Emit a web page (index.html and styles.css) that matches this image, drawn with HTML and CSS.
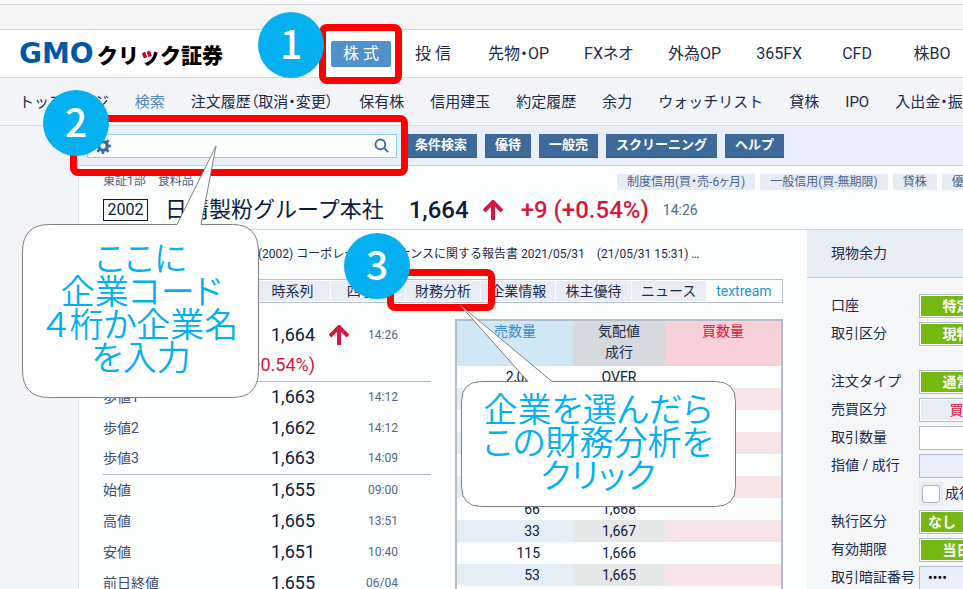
FILE: index.html
```html
<!DOCTYPE html>
<html lang="ja">
<head>
<meta charset="utf-8">
<title>GMOクリック証券</title>
<link rel="stylesheet" href="styles.css">
</head>
<body>
<div class="strip"></div>
<header class="header">
  <a class="logo" href="#"><span class="logo-gmo">GMO</span><span class="logo-name">クリ<span class="logo-dot">ッ</span>ク証券</span></a>
  <nav class="main-nav">
    <a class="active" href="#">株 式</a>
    <a href="#">投 信</a>
    <a href="#">先物・OP</a>
    <a href="#">FXネオ</a>
    <a href="#">外為OP</a>
    <a href="#">365FX</a>
    <a href="#">CFD</a>
    <a href="#">株BO</a>
  </nav>
</header>
<nav class="sub-nav">
  <a href="#">トップページ</a>
  <a class="current" href="#">検索</a>
  <a class="tight" href="#">注文履歴（取消・変更）</a>
  <a href="#">保有株</a>
  <a href="#">信用建玉</a>
  <a href="#">約定履歴</a>
  <a href="#">余力</a>
  <a href="#">ウォッチリスト</a>
  <a href="#">貸株</a>
  <a href="#">IPO</a>
  <a class="tight" href="#">入出金・振替</a>
</nav>
<main class="page">
  <div class="toolbar">
    <div class="search">
      <svg class="gear" viewBox="0 0 24 24" aria-hidden="true"><circle cx="12" cy="12" r="6.500" stroke-width="5"/><circle cx="12" cy="12" r="10" stroke-width="4" pathLength="16" stroke-dasharray="1 1" stroke-dashoffset="0.500"/></svg>
      <input type="text" aria-label="銘柄検索">
      <button class="search-go" type="button" aria-label="検索"><svg viewBox="0 0 16 16"><circle cx="6.800" cy="6.800" r="5.200"/><path d="M10.600 10.600L15 15"/></svg></button>
    </div>
    <button class="tool" type="button">条件検索</button>
    <button class="tool" type="button">優待</button>
    <button class="tool" type="button">一般売</button>
    <button class="tool" type="button">スクリーニング</button>
    <button class="tool" type="button">ヘルプ</button>
  </div>
  <section class="stock">
    <div class="stock-meta">
      <p class="market"><span>東証1部</span><span>食料品</span></p>
      <ul class="tags"><li>制度信用(買・売-6ヶ月)</li><li>一般信用(買-無期限)</li><li>貸株</li><li>優待</li></ul>
    </div>
    <div class="stock-line">
      <span class="code">2002</span>
      <h1>日清製粉グループ本社</h1>
      <strong class="price">1,664</strong>
      <svg class="arrow" viewBox="0 0 20 20"><path d="M10 20V3M1 11l9-9 9 9"/></svg>
      <strong class="change">+9 (+0.54%)</strong>
      <time>14:26</time>
    </div>
  </section>
  <div class="columns">
    <div class="detail">
      <p class="news">(2002) コーポレート<span class="tight">・</span>ガバナンスに関する報告書 2021/05/31　(21/05/31 15:31) …</p>
      <nav class="tabs">
        <a class="tab-first" href="#">時系列</a><a href="#">四季報</a><a href="#">財務分析</a><a href="#">企業情報</a><a href="#">株主優待</a><a href="#">ニュース</a><a class="outside" href="#">textream</a>
      </nav>
      <div class="boards">
        <table class="quotes">
          <tbody>
            <tr><th></th><td class="num">1,664</td><td class="mark"><svg class="arrow" viewBox="0 0 20 20"><path d="M10 20V3M1 11l9-9 9 9"/></svg></td><td class="at">14:26</td></tr>
            <tr><td class="num rise" colspan="2">+9 (+0.54%)</td><td></td><td></td></tr>
          </tbody>
          <tbody>
            <tr><th>歩値1</th><td class="num">1,663</td><td></td><td class="at">14:12</td></tr>
            <tr><th>歩値2</th><td class="num">1,662</td><td></td><td class="at">14:12</td></tr>
            <tr><th>歩値3</th><td class="num">1,663</td><td></td><td class="at">14:09</td></tr>
          </tbody>
          <tbody>
            <tr><th>始値</th><td class="num">1,655</td><td></td><td class="at">09:00</td></tr>
            <tr><th>高値</th><td class="num">1,665</td><td></td><td class="at">13:51</td></tr>
            <tr><th>安値</th><td class="num">1,651</td><td></td><td class="at">10:40</td></tr>
            <tr><th>前日終値</th><td class="num">1,655</td><td></td><td class="at">06/04</td></tr>
          </tbody>
        </table>
        <table class="book">
          <thead><tr><th class="sell">売数量</th><th class="mid">気配値<br>成行</th><th class="buy">買数量</th></tr></thead>
          <tbody>
            <tr><td>2,000</td><td>OVER</td><td></td></tr>
            <tr><td></td><td></td><td></td></tr>
            <tr><td></td><td></td><td></td></tr>
            <tr><td></td><td></td><td></td></tr>
            <tr><td></td><td></td><td></td></tr>
            <tr><td></td><td></td><td></td></tr>
            <tr><td>66</td><td>1,668</td><td></td></tr>
            <tr><td>33</td><td>1,667</td><td></td></tr>
            <tr><td>115</td><td>1,666</td><td></td></tr>
            <tr><td>53</td><td>1,665</td><td></td></tr>
            <tr><td></td><td></td><td></td></tr>
          </tbody>
        </table>
      </div>
    </div>
    <aside class="order">
      <h2>現物余力</h2>
      <form>
        <div class="field"><span class="label">口座</span><span class="box"><button class="on" type="button">特定</button></span></div>
        <div class="field"><span class="label">取引区分</span><span class="box"><button class="on" type="button">現物</button></span></div>
        <div class="field spaced"><span class="label">注文タイプ</span><span class="box"><button class="on" type="button">通常</button></span></div>
        <div class="field"><span class="label">売買区分</span><span class="box"><button class="off" type="button">買</button></span></div>
        <div class="field"><label class="label" for="qty">取引数量</label><input class="box" id="qty" type="text"></div>
        <div class="field"><label class="label" for="limit">指値 / 成行</label><input class="box tint" id="limit" type="text"></div>
        <div class="field"><span class="label"></span><label class="check"><span class="check-cell"><input type="checkbox"></span>成行</label></div>
        <div class="field"><span class="label">執行区分</span><span class="box"><button class="on short" type="button">なし</button></span></div>
        <div class="field"><span class="label">有効期限</span><span class="box"><button class="on" type="button">当日</button></span></div>
        <div class="field"><label class="label" for="pin">取引暗証番号</label><input class="box tint" id="pin" type="password" value="0000"></div>
      </form>
    </aside>
  </div>
</main>
<div class="frame frame-1"></div>
<div class="frame frame-2"></div>
<div class="frame frame-3"></div>
<div class="step step-1">1</div>
<div class="step step-2">2</div>
<div class="step step-3">3</div>
<div class="callout callout-1">
  <svg viewBox="0 0 238 254"><path d="M27.500 79.500H155L194 1L179 79.500H210.500Q236.500 79.500 236.500 107V225Q236.500 252.500 210.500 252.500H27.500Q0.500 252.500 0.500 225V107Q0.500 79.500 27.500 79.500Z"/></svg>
  <p>ここに<br>企業コード<br>４桁か企業名<br>を入力</p>
</div>
<div class="callout callout-2">
  <svg viewBox="0 0 278 204"><path d="M69 77.500L1 1L93 77.500H256.500Q276.500 77.500 276.500 97.500V182.500Q276.500 202.500 256.500 202.500H22.500Q2.500 202.500 2.500 182.500V97.500Q2.500 77.500 22.500 77.500Z"/></svg>
  <p>企業を選んだら<br>この財務分析を<br>クリック</p>
</div>
</body>
</html>
```
FILE: styles.css
```css
* { box-sizing: border-box; }
html, body { height: 100%; }
body {
  margin: 0;
  position: relative;
  overflow: hidden;
  background: #f2f4f8;
  color: #1c2b4a;
  font-family: Roboto, "Noto Sans CJK JP", sans-serif;
  font-size: 14px;
  line-height: 22px;
}
a { color: inherit; text-decoration: none; }
button, input { font: inherit; margin: 0; }
h1, h2, p, ul { margin: 0; padding: 0; }
table { border-collapse: collapse; }
th { font-weight: 400; text-align: left; }
td, th { padding: 0; }
.tight { font-feature-settings: "palt"; }

.strip {
  height: 30px;
  border-top: 4px solid #fdfdfe;
  border-bottom: 1px solid #d5dade;
  background: #f5f5f6;
  box-shadow: inset 0 1px #d4d8e4;
}
.header {
  display: flex;
  align-items: center;
  height: 48px;
  padding-left: 19px;
  background: #fff;
  border-bottom: 1px solid #d6dade;
}
.logo { display: flex; flex: none; align-items: center; width: 312px; color: #000; }
.logo-gmo { width: 78px; font: 700 28px/30px "DejaVu Sans", sans-serif; color: #0058a8; }
.logo-name { font: 900 21px/30px "Noto Sans CJK JP", sans-serif; }
.logo-dot {
  color: transparent;
  background: linear-gradient(#e0001b, #e0001b) 0 0 / 13px 18px no-repeat, #000;
  background-clip: text;
}
.main-nav { display: flex; gap: 35px; align-items: center; padding-top: 1px; font-size: 16px; white-space: nowrap; font-feature-settings: "palt"; }
.main-nav a { min-width: 40px; text-align: center; }
.main-nav .active {
  margin-right: -13px;
  padding: 2px 12px;
  background: #5090cb;
  color: #fff;
  border-radius: 2px;
}
.sub-nav {
  display: flex;
  align-items: center;
  gap: 26px;
  height: 48px;
  padding-left: 19px;
  border-bottom: 1px solid #d5dbe4;
  font-size: 15px;
  white-space: nowrap;
}
.sub-nav .current { color: #5089bd; }

.page { margin-left: 78px; background: #fcfdfd; border-left: 1px solid #dbe1ea; }
.toolbar {
  display: flex;
  align-items: center;
  gap: 8px;
  height: 40px;
  padding-left: 8px;
  background: #e8effa;
  border-bottom: 1px solid #c3d2e6;
}
.search {
  display: flex;
  align-items: center;
  width: 310px;
  height: 24px;
  padding: 0 7px;
  background: #fcfdfd;
  border: 1px solid #8ed0f2;
}
.gear { flex: none; width: 16px; height: 16px; fill: none; stroke: #3e6a99; }
.search input { flex: 1; min-width: 0; height: 20px; border: 0; background: none; }
.search-go { padding: 0; border: 0; background: none; height: 16px; }
.search-go svg { display: block; width: 15px; height: 15px; fill: none; stroke: #3e6a99; stroke-width: 2; }
.tool {
  height: 24px;
  padding: 0 10px;
  border: 0;
  border-bottom: 1px solid #2f5680;
  background: #3d6a99;
  color: #fff;
  font-size: 13px;
  font-weight: 700;
  line-height: 22px;
  white-space: nowrap;
}

.stock { height: 64px; padding-left: 24px; border-bottom: 1px solid #c8d6e4; }
.stock-meta { display: flex; padding-top: 8px; color: #4b628c; font-size: 12px; line-height: 16px; white-space: nowrap; font-feature-settings: "palt"; }
.market { display: flex; flex: none; gap: 12px; width: 514px; line-height: 14px; }
.tags { display: flex; gap: 5px; list-style: none; }
.tags li { padding: 0 10px; background: #e6ecf4; }
.stock-line { display: flex; align-items: center; height: 40px; white-space: nowrap; color: #0d1b38; }
.code { width: 45px; border: 1px solid #0d1b38; font-size: 16px; line-height: 20px; text-align: center; }
.stock-line h1 { margin-left: 17px; font-size: 22px; font-weight: 400; line-height: 32px; }
.price { margin-left: 25px; font-size: 24px; font-weight: 500; }
.arrow { display: block; width: 20px; height: 20px; fill: none; stroke: #d3193f; stroke-width: 4; }
.stock-line .arrow { margin: 0 18px 0 14px; }
.change { color: #d3193f; font-size: 24px; font-weight: 500; }
.stock-line time { margin-left: 14px; color: #50678c; }

.columns { display: flex; }
.detail { flex: none; width: 728px; padding: 0 24px; }
.news { padding: 13px 0 0 155px; font-size: 12px; white-space: nowrap; }
.tabs {
  display: grid;
  grid-template-columns: repeat(9, 1fr);
  gap: 1px;
  height: 24px;
  margin-top: 14px;
  border: 1px solid #b5bfcd;
  padding: 1px;
}
.tabs a { background: #e8edf5; line-height: 20px; text-align: center; white-space: nowrap; }
.tab-first { grid-column: 3; }
.tabs .outside { background: none; color: #1c94dc; }
.boards { display: flex; justify-content: space-between; align-items: flex-start; margin-top: 16px; }
.quotes { width: 328px; table-layout: fixed; color: #3d4f70; }
.quotes tr { height: 31px; }
.quotes tbody + tbody { border-top: 1px solid #b3bdc9; }
.quotes th { width: 121px; }
.num { width: 91px; color: #0d1b38; font-size: 18px; text-align: right; }
.rise { color: #d3193f; }
.mark { padding-left: 14px; }
.at { width: 84px; padding-right: 33px; color: #50678c; font-size: 12px; text-align: right; }
.book { width: 328px; table-layout: fixed; border: 2px solid #b3bcc9; border-collapse: separate; border-spacing: 0; }
.book th { height: 45px; vertical-align: top; text-align: center; line-height: 21px; }
.book th.sell { width: 116px; background: #d0e8f5; color: #3d88c6; }
.book th.mid { width: 92px; background: #d6d9de; }
.book th.buy { background: #f7d0d8; color: #d3193f; }
.book td { height: 22px; text-align: center; color: #0d1b38; }
.book td:first-child { padding-right: 33px; text-align: right; }
.book tbody tr:nth-child(even) td { background: #e6e7e9; }
.book tbody tr:nth-child(even) td:first-child { background: #e4eef7; }
.book tbody tr:nth-child(even) td:last-child { background: #f6e4e8; }

.order { flex: 1; min-width: 0; overflow: hidden; background: #f4f6f8; min-height: 400px; white-space: nowrap; }
.order h2 { height: 48px; padding-left: 24px; background: #e7edf4; border-bottom: 1px solid #c5d3e2; font-size: 14px; font-weight: 400; line-height: 46px; }
.order form { display: grid; gap: 4px; padding: 16px 0 0 24px; }
.field { display: flex; height: 24px; }
.spaced { margin-top: 20px; }
.label { flex: none; width: 88px; }
.box { flex: none; width: 260px; height: 24px; padding: 1px; border: 1px solid #b0bac8; border-radius: 0; background: #fff; }
input.box { padding: 0 8px; font-size: 14px; }
input.tint { background: #e8effb; }
.box button { display: block; width: 71px; height: 20px; padding: 0; border: 0; font-size: 14px; line-height: 20px; }
.box .on { background: #76b812; color: #fff; font-weight: 700; }
.box .off { background: #e7edf4; color: #d3193f; }
.box .short { width: 42px; }
.check { display: flex; gap: 2px; }
.check-cell { display: flex; align-items: center; justify-content: center; width: 24px; background: #e7edf4; }
.check input { appearance: none; width: 18px; height: 18px; border: 1px solid #a9b4c4; border-radius: 3px; background: #fff; }

.frame { position: absolute; border: 7px solid #f00; border-radius: 8px; }
.frame-1 { left: 319px; top: 24px; width: 83px; height: 60px; }
.frame-2 { left: 70px; top: 115px; width: 338px; height: 61px; }
.frame-3 { left: 387px; top: 269px; width: 108px; height: 42px; }
.step {
  position: absolute;
  width: 66px;
  height: 66px;
  border-radius: 50%;
  background: #04b0ef;
  color: #fff;
  font: 500 39px/60px "Noto Sans CJK JP", sans-serif;
  text-align: center;
}
.step-1 { left: 258px; top: 12px; }
.step-2 { left: 43px; top: 90px; }
.step-3 { left: 344px; top: 233px; }
.callout { position: absolute; color: #04b0ef; font: 350 34px/33px "Noto Sans CJK JP", sans-serif; font-feature-settings: "palt"; text-align: center; white-space: nowrap; }
.callout svg { position: absolute; left: 0; top: 0; width: 100%; height: 100%; fill: #fff; stroke: #7f7f7f; stroke-width: 1; }
.callout p { position: relative; }
.callout-1 { left: 22px; top: 145px; width: 238px; height: 254px; padding-top: 95px; }
.callout-2 { left: 459px; top: 304px; width: 278px; height: 204px; padding-top: 87px; }
```
